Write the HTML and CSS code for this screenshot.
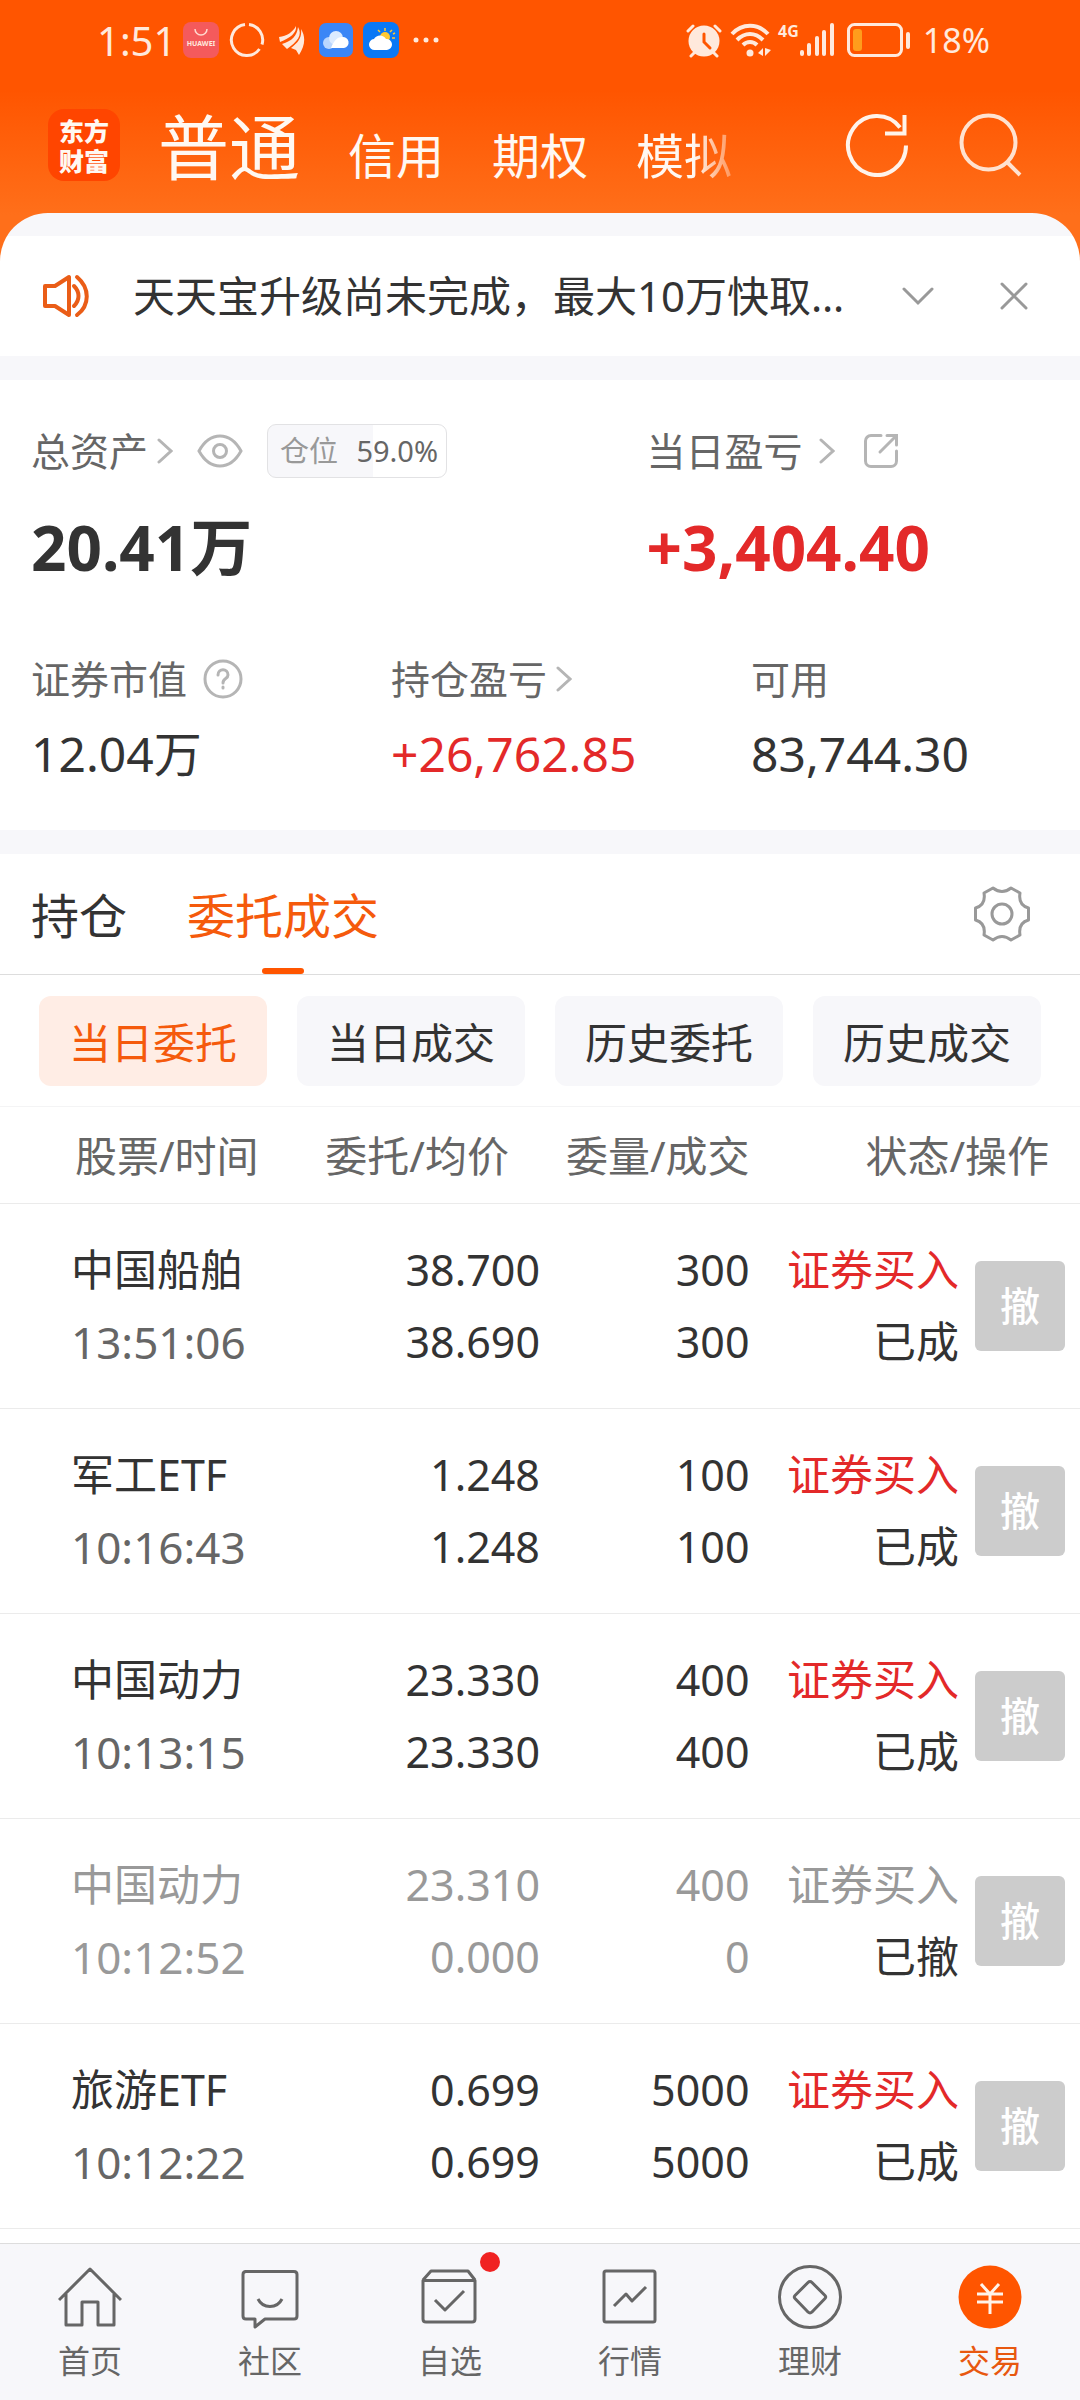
FILE: index.html
```html
<!DOCTYPE html>
<html lang="zh-CN">
<head>
    <meta charset="UTF-8">
    <meta name="viewport" content="width=device-width, initial-scale=1.0">
    <title>交易</title>
    <link rel="stylesheet" href="styles.css">
</head>
<body>
    <header class="top">
        <div class="status-bar">
            <span class="clock">1:51</span>
            <svg class="app-icon" width="36" height="36" viewBox="0 0 36 36">
                <rect width="36" height="36" rx="8" fill="#f45a5c"/>
                <path d="M12 7a6 6 0 0 0 12 0" fill="none" stroke="#ffd9cf" stroke-width="1.5"/>
                <text x="18" y="24" text-anchor="middle" class="huawei">HUAWEI</text>
            </svg>
            <svg class="app-icon" width="36" height="36" viewBox="0 0 36 36" fill="none" stroke="#ffe9dc" stroke-width="3">
                <path d="M20 2.6A15.5 15.5 0 0 1 33 22.5M30.5 27A15.5 15.5 0 1 1 16 2.6"/>
            </svg>
            <svg class="app-icon leaf" width="26" height="30" viewBox="0 0 26 30" fill="#ffe9dc">
                <path d="M0 12C8 11 14 7 17 1C18 8 11 13 1 17Z"/>
                <path d="M3 19C13 16 18 11 19 2C24 10 18 17 8 24Z"/>
                <path d="M12 23C20 17 23 12 22 4C27 12 26 21 20 30L17 25Z"/>
            </svg>
            <svg class="app-icon" width="34" height="34" viewBox="0 0 34 34">
                <rect width="34" height="34" rx="7" fill="#3b86f6"/>
                <circle cx="10" cy="20" r="6" fill="#b9d6ff"/>
                <circle cx="17" cy="15" r="7" fill="#dcebff"/>
                <path d="M12 25C15 17 19 14 23 14A5.5 5.5 0 0 1 25 25Z" fill="#fff"/>
            </svg>
            <svg class="app-icon" width="36" height="36" viewBox="0 0 36 36">
                <rect width="36" height="36" rx="8" fill="#0a78f5"/>
                <path d="M22 6v3M29 8l-2 2M32 16h-3M15 8l2 2M30 12l2-1" stroke="#ffc933" stroke-width="1.5"/>
                <circle cx="22" cy="15" r="5" fill="#ffc933"/>
                <path d="M12 28a5.5 5.5 0 0 1-1-11a7 7 0 0 1 12 0a5.5 5.5 0 0 1 1 11Z" fill="#fff"/>
            </svg>
            <svg class="more-dots" width="26" height="6" viewBox="0 0 26 6" fill="#ffe9dc">
                <circle cx="3" cy="3" r="2.5"/><circle cx="13" cy="3" r="2.5"/><circle cx="23" cy="3" r="2.5"/>
            </svg>
            <div class="status-right">
                <svg width="36" height="36" viewBox="0 0 36 36" fill="none" stroke="#ffe9dc" stroke-width="3" stroke-linecap="round">
                    <circle cx="18" cy="19" r="15.5" fill="#ffe9dc" stroke="none"/>
                    <path d="M2 9l5-5M34 9l-5-5M5 34l4-4M31 34l-4-4"/>
                    <path d="M18 12v8l6 6" stroke="#ff5500"/>
                </svg>
                <svg width="42" height="36" viewBox="0 0 42 36" fill="none" stroke="#ffe9dc" stroke-width="4">
                    <path d="M2 12C12 1 28 1 38 12M7 18C15 10 25 10 33 18M13 23C17 19 23 19 27 23"/>
                    <circle cx="20" cy="31" r="3.5" fill="#ffe9dc" stroke="none"/>
                    <path d="M28 31l5-5v8ZM35 26v8l6-6Z" fill="#ffe9dc" stroke="none"/>
                </svg>
                <span class="net">4G</span>
                <svg width="36" height="36" viewBox="0 0 36 36" fill="#ffe9dc">
                    <rect x="1" y="28" width="4" height="6" rx="2"/><rect x="8" y="21" width="4" height="13" rx="2"/>
                    <rect x="16" y="14" width="4" height="20" rx="2"/><rect x="23" y="8" width="4" height="26" rx="2"/>
                    <rect x="31" y="1" width="4" height="33" rx="2"/>
                </svg>
                <svg class="battery" width="64" height="34" viewBox="0 0 64 34">
                    <rect x="1.5" y="1.5" width="53" height="31" rx="6" fill="none" stroke="#ffe9dc" stroke-width="3"/>
                    <rect x="6" y="6" width="9" height="22" rx="3" fill="#ff9d1c"/>
                    <rect x="59" y="9" width="4" height="17" rx="2" fill="#ffe9dc"/>
                </svg>
                <span class="percent">18%</span>
            </div>
        </div>
        <div class="title-bar">
            <a href="#" class="logo"><span>东方</span><span>财富</span></a>
            <nav class="accounts">
                <a href="#" class="current">普通</a>
                <a href="#">信用</a>
                <a href="#">期权</a>
                <a href="#">模拟</a>
            </nav>
            <button class="icon-btn" aria-label="刷新">
                <svg width="64" height="64" viewBox="0 0 64 64" fill="none" stroke="#fff3ea" stroke-width="4">
                    <path d="M61 32.5A29 29.5 0 1 1 55 14.5"/>
                    <path d="M40 20.5H59.5V2"/>
                </svg>
            </button>
            <button class="icon-btn" aria-label="搜索">
                <svg width="64" height="64" viewBox="0 0 64 64" fill="none" stroke="#ffe2d0" stroke-width="4">
                    <circle cx="29.5" cy="29.5" r="27"/>
                    <path d="M48 49L61 62"/>
                </svg>
            </button>
        </div>
    </header>

    <main class="sheet">
        <section class="notice">
            <svg width="46" height="44" viewBox="0 0 46 44" fill="none" stroke="#ea5d17" stroke-width="4" stroke-linejoin="round" stroke-linecap="round">
                <path d="M2 12H12L26 3V41L12 32H2Z"/>
                <path d="M31 12C37 18 37 26 31 32M34 3C47 14 47 31 34 41"/>
            </svg>
            <p>天天宝升级尚未完成，最大10万快取…</p>
            <button class="icon-btn" aria-label="展开">
                <svg width="32" height="32" viewBox="0 0 32 32" class="line-grey"><path d="M2 9L16 23L30 9"/></svg>
            </button>
            <button class="icon-btn close" aria-label="关闭">
                <svg width="28" height="28" viewBox="0 0 28 28" class="line-grey"><path d="M2 2L26 26M26 2L2 26"/></svg>
            </button>
        </section>

        <section class="assets">
            <div class="asset-main">
                <div>
                    <div class="label">
                        <a href="#">总资产</a>
                        <svg class="arrow" width="16" height="26" viewBox="0 0 16 26"><path d="M2 2L14 13L2 24"/></svg>
                        <svg class="eye" width="46" height="34" viewBox="0 0 46 34">
                            <path d="M2 17C13-3 33-3 44 17C33 37 13 37 2 17Z"/><circle cx="23" cy="17" r="6.5"/>
                        </svg>
                        <span class="position"><em>仓位</em>59.0%</span>
                    </div>
                    <strong>20.41万</strong>
                </div>
                <div>
                    <div class="label">
                        <a href="#">当日盈亏</a>
                        <svg class="arrow wide" width="16" height="26" viewBox="0 0 16 26"><path d="M2 2L14 13L2 24"/></svg>
                        <svg class="share" width="36" height="36" viewBox="0 0 36 36">
                            <path d="M18 2.5H8A5.5 5.5 0 0 0 2.5 8V28A5.5 5.5 0 0 0 8 33.5H28A5.5 5.5 0 0 0 33.5 28V18M17 19L33 3M24 2.5H33.5V12"/>
                        </svg>
                    </div>
                    <strong class="red">+3,404.40</strong>
                </div>
            </div>
            <div class="asset-sub">
                <div>
                    <div class="label">
                        <span>证券市值</span>
                        <svg class="help" width="40" height="40" viewBox="0 0 40 40">
                            <circle cx="20" cy="20" r="18"/>
                            <path d="M15 16C15 9 25 9 25 16C25 20 20 19 20 24"/><path d="M20 28v1"/>
                        </svg>
                    </div>
                    <b>12.04万</b>
                </div>
                <div>
                    <div class="label">
                        <a href="#">持仓盈亏</a>
                        <svg class="arrow" width="16" height="26" viewBox="0 0 16 26"><path d="M2 2L14 13L2 24"/></svg>
                    </div>
                    <b class="red">+26,762.85</b>
                </div>
                <div>
                    <div class="label"><span>可用</span></div>
                    <b>83,744.30</b>
                </div>
            </div>
        </section>

        <section class="orders">
            <div class="tabs">
                <button class="tab">持仓</button>
                <button class="tab active">委托成交</button>
                <button class="icon-btn gear" aria-label="设置">
                    <svg width="56" height="56" viewBox="0 0 56 56">
                        <path d="M19 2Q28 9 37 2L46 7Q44 19 54.5 22V34Q44 37 46 49L37 54Q28 47 19 54L10 49Q12 37 1.5 34V22Q12 19 10 7Z"/>
                        <circle cx="28" cy="28" r="10"/>
                    </svg>
                </button>
            </div>
            <div class="chips">
                <button class="chip active">当日委托</button>
                <button class="chip">当日成交</button>
                <button class="chip">历史委托</button>
                <button class="chip">历史成交</button>
            </div>
            <table>
                <colgroup>
                    <col class="c-name"><col class="c-price"><col class="c-qty"><col class="c-state"><col>
                </colgroup>
                <thead>
                    <tr>
                        <th class="name">股票/时间</th>
                        <th class="price">委托/均价</th>
                        <th>委量/成交</th>
                        <th class="state" colspan="2">状态/操作</th>
                    </tr>
                </thead>
                <tbody>
                    <tr>
                        <td class="name">中国船舶<small>13:51:06</small></td>
                        <td>38.700<br>38.690</td>
                        <td>300<br>300</td>
                        <td><span class="red">证券买入</span><br>已成</td>
                        <td><button class="cancel" disabled>撤</button></td>
                    </tr>
                    <tr>
                        <td class="name">军工ETF<small>10:16:43</small></td>
                        <td>1.248<br>1.248</td>
                        <td>100<br>100</td>
                        <td><span class="red">证券买入</span><br>已成</td>
                        <td><button class="cancel" disabled>撤</button></td>
                    </tr>
                    <tr>
                        <td class="name">中国动力<small>10:13:15</small></td>
                        <td>23.330<br>23.330</td>
                        <td>400<br>400</td>
                        <td><span class="red">证券买入</span><br>已成</td>
                        <td><button class="cancel" disabled>撤</button></td>
                    </tr>
                    <tr class="revoked">
                        <td class="name">中国动力<small>10:12:52</small></td>
                        <td>23.310<br>0.000</td>
                        <td>400<br>0</td>
                        <td>证券买入<br><span class="dark">已撤</span></td>
                        <td><button class="cancel" disabled>撤</button></td>
                    </tr>
                    <tr>
                        <td class="name">旅游ETF<small>10:12:22</small></td>
                        <td>0.699<br>0.699</td>
                        <td>5000<br>5000</td>
                        <td><span class="red">证券买入</span><br>已成</td>
                        <td><button class="cancel" disabled>撤</button></td>
                    </tr>
                </tbody>
            </table>
        </section>
    </main>

    <nav class="bottom-nav">
        <a href="#">
            <svg width="64" height="64" viewBox="0 0 64 64">
                <path d="M1 35L32 4L63 35M8 29V60H24V37H40V60H56V29"/>
            </svg>
            首页
        </a>
        <a href="#">
            <svg width="64" height="64" viewBox="0 0 64 64">
                <path d="M7 6.5H56Q59 6.5 59 9.5V51Q59 54 56 54H27L17 62V54H8Q5 54 5 51V9.5Q5 6.5 8 6.5Z"/>
                <path d="M20 34C25 44 39 44 44 34"/>
            </svg>
            社区
        </a>
        <a href="#">
            <svg width="64" height="64" viewBox="0 0 64 64">
                <path d="M5 15.5H57V54Q57 57 54 57H8Q5 57 5 54ZM5 15L13 6H50L57 15"/>
                <path d="M17 35L27 45L46 26"/>
            </svg>
            自选
            <i class="dot"></i>
        </a>
        <a href="#">
            <svg width="64" height="64" viewBox="0 0 64 64">
                <rect x="6" y="6" width="51" height="51" rx="2"/>
                <path d="M16 41L28 29L34 36L48 22"/>
            </svg>
            行情
        </a>
        <a href="#">
            <svg width="64" height="64" viewBox="0 0 64 64">
                <circle cx="32" cy="32" r="30.5"/>
                <path d="M30 17.5Q32 15.5 34 17.5L47 30.5Q48.5 32 47 33.5L34 47Q32 49 30 47L17 33.5Q15.5 32 17 30.5Z"/>
            </svg>
            理财
        </a>
        <a href="#" class="active">
            <svg width="64" height="64" viewBox="0 0 64 64">
                <circle cx="32" cy="32" r="31.5" class="disc"/>
                <path d="M23 19L32 29L41 19M19 29H45M19 37H45M32 29V49"/>
            </svg>
            交易
        </a>
    </nav>
</body>
</html>
```

FILE: styles.css
```css
* {
    box-sizing: border-box;
}
body {
    display: flex;
    flex-direction: column;
    min-height: 100vh;
    margin: 0;
    background-color: #fff;
    color: #333;
    font-family: "Noto Sans", "Noto Sans CJK SC", sans-serif;
    font-size: 42px;
}
a {
    color: inherit;
    text-decoration: none;
}
button {
    padding: 0;
    border: 0;
    background: none;
    color: inherit;
    font: inherit;
    cursor: pointer;
}
svg {
    display: block;
    flex: none;
}
.red {
    color: #e32929;
}
.line-grey {
    fill: none;
    stroke: #999;
    stroke-width: 3;
    stroke-linecap: round;
}

/* header */
.top {
    padding-bottom: 48px;
    background: linear-gradient(#ff5500 90px, #ff6f1a 215px);
    color: #fff8f2;
}
.status-bar {
    display: flex;
    align-items: center;
    height: 80px;
    padding: 0 90px 0 97px;
    color: #ffe9dc;
}
.clock {
    width: 86px;
    font-size: 40px;
}
.app-icon {
    margin-right: 10px;
}
.leaf {
    margin: 0 14px 0 4px;
}
.more-dots {
    margin-left: 4px;
}
.huawei {
    fill: #ffe9dc;
    font-size: 7px;
    font-weight: bold;
}
.status-right {
    display: flex;
    align-items: center;
    margin-left: auto;
}
.status-right svg:nth-child(2) {
    margin-left: 8px;
}
.net {
    align-self: flex-start;
    margin: 6px 0 0 6px;
    font-size: 16px;
    font-weight: bold;
    line-height: 16px;
}
.battery {
    margin: 0 12px;
}
.percent {
    font-size: 34px;
}
.title-bar {
    display: flex;
    align-items: center;
    height: 133px;
    padding: 0 57px 3px 48px;
}
.logo {
    display: flex;
    flex-direction: column;
    justify-content: center;
    width: 72px;
    height: 72px;
    border-radius: 16px;
    background-color: #ff4500;
    font-family: "Noto Sans CJK SC", sans-serif;
    font-size: 25px;
    font-weight: 900;
    line-height: 30px;
    text-align: center;
}
.accounts {
    display: flex;
    flex: 1;
    align-items: baseline;
    gap: 48px;
    margin: 12px 0 0 38px;
    font-size: 48px;
    line-height: 100px;
}
.accounts .current {
    font-size: 71px;
}
.accounts a:last-child {
    -webkit-mask-image: linear-gradient(to right, #000 60%, transparent 120%);
    mask-image: linear-gradient(to right, #000 60%, transparent 120%);
}
.title-bar .icon-btn + .icon-btn {
    margin-left: 50px;
}

/* white sheet */
.sheet {
    flex: 1;
    margin-top: -48px;
    padding-top: 23px;
    border-radius: 48px 48px 0 0;
    background: linear-gradient(#f7f7fa 23px, #fff 23px);
}
.notice {
    display: flex;
    align-items: center;
    height: 120px;
    padding: 0 52px 0 43px;
}
.notice p {
    flex: 1;
    margin: 0 0 0 44px;
    overflow: hidden;
    line-height: 60px;
    white-space: nowrap;
}
.notice .close {
    margin-left: 66px;
}
.assets {
    padding: 44px 0 40px;
    border-top: 24px solid #f7f7fa;
    border-bottom: 24px solid #f7f7fa;
}
.asset-main {
    display: grid;
    grid-template-columns: 57% 43%;
    margin-bottom: 60px;
}
.asset-sub {
    display: grid;
    grid-template-columns: repeat(3, 1fr);
}
.asset-main > div, .asset-sub > div {
    padding-left: 31px;
}
.label {
    display: flex;
    align-items: center;
    height: 54px;
    color: #666;
    font-size: 39px;
    line-height: 50px;
}
.label svg {
    fill: none;
    stroke: #b5b5b5;
    stroke-width: 3;
    stroke-linecap: round;
}
.arrow {
    margin-left: 9px;
}
.arrow.wide {
    margin-left: 16px;
}
.eye {
    margin-left: 24px;
}
.share {
    margin-left: 28px;
}
.help {
    margin-left: 16px;
}
.position {
    display: flex;
    align-items: center;
    justify-content: space-between;
    width: 180px;
    height: 54px;
    margin-left: 24px;
    padding: 0 8px 0 12px;
    border: 1px solid #e2e2e4;
    border-radius: 9px;
    background: linear-gradient(to right, #f7f7fa 59%, #fff 59%);
    font-size: 29px;
}
.position em {
    color: #999;
    font-style: normal;
}
.assets strong {
    display: block;
    margin-top: 24px;
    font-size: 62px;
    line-height: 90px;
}
.assets b {
    display: block;
    margin-top: 12px;
    font-size: 48px;
    font-weight: normal;
    line-height: 72px;
}

/* orders */
.tabs {
    display: flex;
    gap: 60px;
    height: 121px;
    padding: 0 50px 0 31px;
    border-bottom: 1px solid #ddd;
    font-size: 48px;
}
.tab {
    padding-bottom: 2px;
}
.tab.active {
    position: relative;
    color: #f55a0c;
}
.tab.active::after {
    content: "";
    position: absolute;
    bottom: 0;
    left: 50%;
    width: 42px;
    height: 6px;
    margin-left: -21px;
    border-radius: 3px;
    background-color: #ff5500;
}
.gear {
    margin-left: auto;
}
.gear svg {
    fill: none;
    stroke: #999;
    stroke-width: 3;
    stroke-linejoin: round;
}
.chips {
    display: grid;
    grid-template-columns: repeat(4, 1fr);
    gap: 30px;
    padding: 21px 39px 20px;
    border-bottom: 1px solid #f4f4f5;
}
.chip {
    height: 90px;
    padding-bottom: 2px;
    border-radius: 12px;
    background-color: #f7f7fa;
}
.chip.active {
    background-color: #ffede5;
    color: #f55a0c;
}
table {
    width: 100%;
    border-collapse: collapse;
    table-layout: fixed;
}
.c-name {
    width: 27%;
}
.c-price {
    width: 23%;
}
.c-qty, .c-state {
    width: 19.4%;
}
th, td {
    padding: 0;
    border-bottom: 1px solid #ebebeb;
    text-align: right;
    white-space: nowrap;
}
th {
    height: 96px;
    padding-bottom: 2px;
    color: #666;
    font-weight: normal;
}
td {
    height: 205px;
    font-size: 43px;
    line-height: 72px;
}
th.name {
    padding-left: 75px;
    text-align: left;
}
th.price, th.state {
    padding-right: 31px;
}
td.name {
    padding-left: 71px;
    text-align: left;
}
small {
    display: block;
    color: #666;
    font-size: 44px;
}
.revoked, .revoked small {
    color: #999;
}
.dark {
    color: #333;
}
.cancel {
    display: block;
    width: 90px;
    height: 90px;
    margin: 0 15px 0 auto;
    border-radius: 6px;
    background-color: #ccc;
    color: #fff;
    font-size: 40px;
    font-weight: 500;
}

/* bottom navigation */
.bottom-nav {
    display: grid;
    grid-template-columns: repeat(6, 1fr);
    height: 157px;
    border-top: 1px solid #ddd;
    background-color: #f7f7fa;
}
.bottom-nav a {
    position: relative;
    padding-top: 21px;
    color: #666;
    font-size: 32px;
    line-height: 40px;
    text-align: center;
}
.bottom-nav svg {
    margin: 0 auto 12px;
    fill: none;
    stroke: #666;
    stroke-width: 3;
    stroke-linejoin: round;
}
.bottom-nav .active {
    color: #e8580f;
}
.bottom-nav .active svg {
    stroke: #fff3ea;
}
.bottom-nav .disc {
    fill: #ff5500;
    stroke: none;
}
.dot {
    position: absolute;
    top: 8px;
    left: 50%;
    width: 20px;
    height: 20px;
    margin-left: 30px;
    border-radius: 50%;
    background-color: #f02222;
}
```
